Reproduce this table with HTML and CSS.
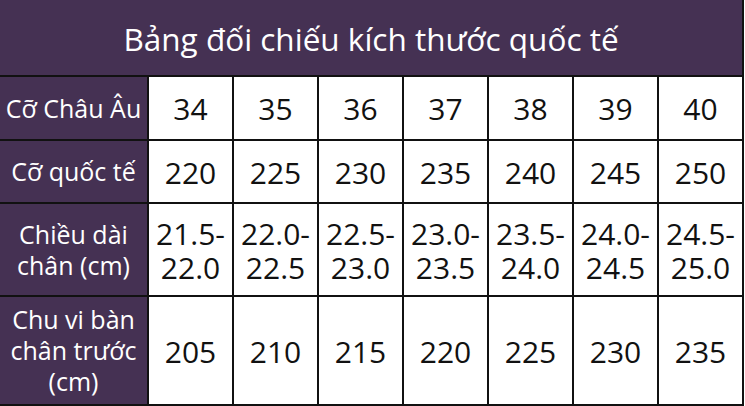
FILE: index.html
```html
<!DOCTYPE html>
<html lang="vi">
<head>
<meta charset="utf-8">
<title>Bảng đối chiếu kích thước quốc tế</title>
<link rel="stylesheet" href="styles.css">
</head>
<body>
<div class="chart">
  <div class="title">Bảng đối chiếu kích thước quốc tế</div>

  <div class="label">Cỡ Châu Âu</div>
  <div class="cell">34</div><div class="cell">35</div><div class="cell">36</div><div class="cell">37</div><div class="cell">38</div><div class="cell">39</div><div class="cell">40</div>

  <div class="label">Cỡ quốc tế</div>
  <div class="cell">220</div><div class="cell">225</div><div class="cell">230</div><div class="cell">235</div><div class="cell">240</div><div class="cell">245</div><div class="cell">250</div>

  <div class="label">Chiều dài<br>chân (cm)</div>
  <div class="cell">21.5-<br>22.0</div><div class="cell">22.0-<br>22.5</div><div class="cell">22.5-<br>23.0</div><div class="cell">23.0-<br>23.5</div><div class="cell">23.5-<br>24.0</div><div class="cell">24.0-<br>24.5</div><div class="cell">24.5-<br>25.0</div>

  <div class="label">Chu vi bàn<br>chân trước<br>(cm)</div>
  <div class="cell">205</div><div class="cell">210</div><div class="cell">215</div><div class="cell">220</div><div class="cell">225</div><div class="cell">230</div><div class="cell">235</div>
</div>
</body>
</html>
```

FILE: styles.css
```css
html, body {
  margin: 0;
  padding: 0;
  background: #ffffff;
}

.chart {
  display: grid;
  grid-template-columns: 147px repeat(7, 83px);
  grid-template-rows: 75px 62px 61px 91px 107px;
  gap: 2px;
  width: 742px;
  padding: 0 2px 2px 0;
  background: #111111;
  font-family: "Open Sans", "Liberation Sans", sans-serif;
}

.title {
  grid-column: 1 / -1;
  background: #453153;
  color: #ffffff;
  font-size: 31.5px;
  display: flex;
  align-items: center;
  justify-content: center;
  padding-top: 2px;
}

.label {
  background: #453153;
  color: #ffffff;
  font-size: 25px;
  line-height: 31px;
  display: flex;
  align-items: center;
  justify-content: center;
  text-align: center;
}

.cell {
  background: #ffffff;
  color: #111111;
  font-size: 30px;
  line-height: 34px;
  display: flex;
  align-items: center;
  justify-content: center;
  text-align: center;
  padding-top: 2px;
}
```
